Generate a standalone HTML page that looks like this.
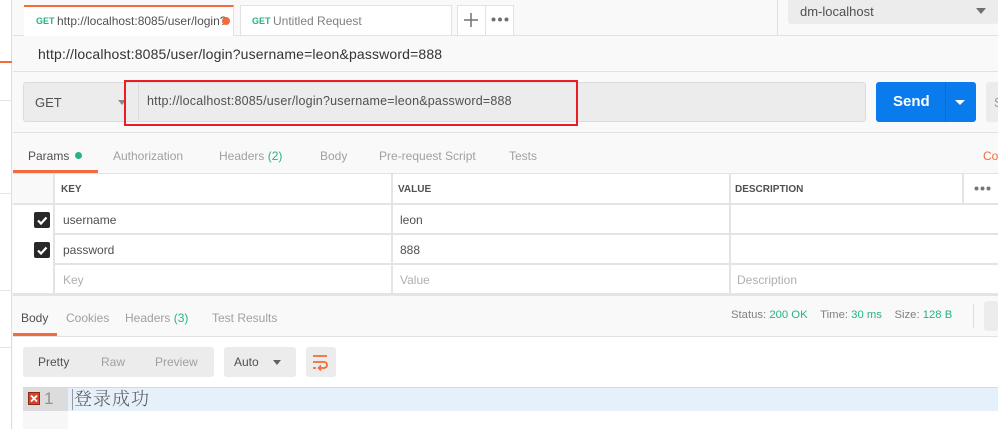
<!DOCTYPE html>
<html><head><meta charset="utf-8"><style>
*{margin:0;padding:0;box-sizing:border-box}
body{width:998px;height:429px;overflow:hidden;background:#f9f9f9;font-family:"Liberation Sans","Noto Sans CJK SC",sans-serif;font-size:12px;color:#505050;position:relative;line-height:1.2}
.a{position:absolute}
.g{color:#26b47f}
</style></head><body>
<div class="a" style="left:0;top:0;width:12px;height:429px;background:#fff;border-right:1px solid #ddd"></div>
<div class="a" style="left:0;top:61px;width:12px;height:2px;background:#f26b3a"></div>
<div class="a" style="left:0;top:100px;width:12px;height:1px;background:#e5e5e5"></div>
<div class="a" style="left:0;top:193px;width:12px;height:1px;background:#e5e5e5"></div>
<div class="a" style="left:0;top:290px;width:12px;height:1px;background:#e5e5e5"></div>
<div class="a" style="left:0;top:347px;width:12px;height:1px;background:#e5e5e5"></div>
<div class="a" style="left:13px;top:35px;width:985px;height:1px;background:#e2e2e2"></div>
<div class="a" style="left:24px;top:5px;width:210px;height:31px;background:#fff;border-top:2px solid #f26b3a;border-right:1px solid #e2e2e2"></div>
<div class="a" style="left:36px;top:16px;font-size:9px;font-weight:bold;color:#26b47f">GET</div>
<div class="a" style="left:57px;top:14px;font-size:12px;color:#505050">http://localhost:8085/user/login?</div>
<div class="a" style="left:222px;top:17px;width:8px;height:8px;border-radius:50%;background:#f26b3a"></div>
<div class="a" style="left:240px;top:5px;width:212px;height:30px;background:#fff;border:1px solid #e2e2e2;border-bottom:none"></div>
<div class="a" style="left:252px;top:16px;font-size:9px;font-weight:bold;color:#26b47f">GET</div>
<div class="a" style="left:273px;top:14px;font-size:12px;color:#808080">Untitled Request</div>
<div class="a" style="left:457px;top:5px;width:57px;height:30px;background:#fff;border:1px solid #e2e2e2;border-bottom:none"></div>
<div class="a" style="left:485px;top:5px;width:1px;height:30px;background:#e2e2e2"></div>
<svg class="a" style="left:464px;top:13px" width="14" height="14"><path d="M7 0v14M0 7h14" stroke="#707070" stroke-width="1.5"/></svg>
<svg class="a" style="left:491px;top:17px" width="18" height="5"><circle cx="2.5" cy="2.5" r="2" fill="#707070"/><circle cx="9" cy="2.5" r="2" fill="#707070"/><circle cx="15.5" cy="2.5" r="2" fill="#707070"/></svg>
<div class="a" style="left:777px;top:0;width:1px;height:35px;background:#e2e2e2"></div>
<div class="a" style="left:788px;top:0;width:210px;height:24px;background:#ececec;border-radius:0 0 3px 3px"></div>
<div class="a" style="left:800px;top:4px;font-size:13px;color:#505050">dm-localhost</div>
<div class="a" style="left:976px;top:8px;border:5px solid transparent;border-top:6px solid #707070"></div>
<div class="a" style="left:38px;top:46px;font-size:14px;color:#333;letter-spacing:0.15px">http://localhost:8085/user/login?username=leon&amp;password=888</div>
<div class="a" style="left:13px;top:71px;width:985px;height:1px;background:#e2e2e2"></div>
<div class="a" style="left:23px;top:82px;width:843px;height:40px;background:#ececec;border:1px solid #dcdcdc;border-radius:3px"></div>
<div class="a" style="left:138px;top:82px;width:1px;height:40px;background:#dcdcdc"></div>
<div class="a" style="left:35px;top:95px;font-size:13px;color:#505050">GET</div>
<div class="a" style="left:118px;top:100px;border:4px solid transparent;border-top:5px solid #888"></div>
<div class="a" style="left:147px;top:94px;font-size:12.5px;color:#505050;letter-spacing:0.2px">http://localhost:8085/user/login?username=leon&amp;password=888</div>
<div class="a" style="left:124px;top:80px;width:454px;height:46px;border:2px solid #ec1c24"></div>
<div class="a" style="left:876px;top:82px;width:100px;height:40px;background:#097bed;border-radius:3px"></div>
<div class="a" style="left:945px;top:82px;width:1px;height:40px;background:#0a6cd0"></div>
<div class="a" style="left:893px;top:93px;font-size:15px;font-weight:bold;color:#fff">Send</div>
<div class="a" style="left:955px;top:100px;border:5px solid transparent;border-top:5px solid #fff"></div>
<div class="a" style="left:986px;top:82px;width:14px;height:40px;background:#ececec;border-radius:3px"></div>
<div class="a" style="left:994px;top:95px;font-size:13px;color:#999">S</div>
<div class="a" style="left:13px;top:132px;width:985px;height:1px;background:#e2e2e2"></div>
<div class="a" style="left:28px;top:149px;font-size:12px;color:#505050">Params</div>
<div class="a" style="left:75px;top:152px;width:7px;height:7px;border-radius:50%;background:#26b47f"></div>
<div class="a" style="left:113px;top:149px;color:#a0a0a0">Authorization</div>
<div class="a" style="left:219px;top:149px;color:#a0a0a0">Headers <span class="g">(2)</span></div>
<div class="a" style="left:320px;top:149px;color:#a0a0a0">Body</div>
<div class="a" style="left:379px;top:149px;color:#a0a0a0">Pre-request Script</div>
<div class="a" style="left:509px;top:149px;color:#a0a0a0">Tests</div>
<div class="a" style="left:983px;top:149px;color:#f26b3a">Co</div>
<div class="a" style="left:13px;top:170px;width:85px;height:3px;background:#f26b3a"></div>
<div class="a" style="left:13px;top:173px;width:985px;height:1px;background:#e2e2e2"></div>
<div class="a" style="left:13px;top:174px;width:985px;height:122px;background:#e4e4e4"></div>
<div class="a" style="left:13px;top:174px;width:40px;height:29px;background:#f9f9f9"></div>
<div class="a" style="left:55px;top:174px;width:336px;height:29px;background:#fff"></div>
<div class="a" style="left:393px;top:174px;width:336px;height:29px;background:#fff"></div>
<div class="a" style="left:731px;top:174px;width:231px;height:29px;background:#fff"></div>
<div class="a" style="left:964px;top:174px;width:34px;height:29px;background:#fff"></div>
<div class="a" style="left:13px;top:205px;width:40px;height:88px;background:#fff"></div>
<div class="a" style="left:55px;top:205px;width:336px;height:28px;background:#fff"></div>
<div class="a" style="left:393px;top:205px;width:336px;height:28px;background:#fff"></div>
<div class="a" style="left:731px;top:205px;width:267px;height:28px;background:#fff"></div>
<div class="a" style="left:55px;top:235px;width:336px;height:28px;background:#fff"></div>
<div class="a" style="left:393px;top:235px;width:336px;height:28px;background:#fff"></div>
<div class="a" style="left:731px;top:235px;width:267px;height:28px;background:#fff"></div>
<div class="a" style="left:55px;top:265px;width:336px;height:28px;background:#fff"></div>
<div class="a" style="left:393px;top:265px;width:336px;height:28px;background:#fff"></div>
<div class="a" style="left:731px;top:265px;width:267px;height:28px;background:#fff"></div>
<div class="a" style="left:61px;top:184px;font-size:10px;font-weight:bold;color:#505050">KEY</div>
<div class="a" style="left:398px;top:184px;font-size:10px;font-weight:bold;color:#505050">VALUE</div>
<div class="a" style="left:735px;top:184px;font-size:10px;font-weight:bold;color:#505050">DESCRIPTION</div>
<svg class="a" style="left:974px;top:186px" width="17" height="5"><circle cx="2.5" cy="2.5" r="2" fill="#777"/><circle cx="8.5" cy="2.5" r="2" fill="#777"/><circle cx="14.5" cy="2.5" r="2" fill="#777"/></svg>
<div class="a" style="left:34px;top:212px;width:16px;height:16px;background:#282828;border-radius:2px"></div>
<div class="a" style="left:34px;top:242px;width:16px;height:16px;background:#282828;border-radius:2px"></div>
<svg class="a" style="left:34px;top:212px" width="16" height="16"><path d="M4 8.5l3 3 5.5-6" stroke="#fff" stroke-width="2.2" fill="none"/></svg>
<svg class="a" style="left:34px;top:242px" width="16" height="16"><path d="M4 8.5l3 3 5.5-6" stroke="#fff" stroke-width="2.2" fill="none"/></svg>
<div class="a" style="left:63px;top:213px;font-size:12px;color:#505050">username</div>
<div class="a" style="left:400px;top:213px;font-size:12px;color:#505050">leon</div>
<div class="a" style="left:63px;top:243px;font-size:12px;color:#505050">password</div>
<div class="a" style="left:400px;top:243px;font-size:12px;color:#505050">888</div>
<div class="a" style="left:63px;top:273px;font-size:12px;color:#b0b0b0">Key</div>
<div class="a" style="left:400px;top:273px;font-size:12px;color:#b0b0b0">Value</div>
<div class="a" style="left:737px;top:273px;font-size:12px;color:#b0b0b0">Description</div>
<div class="a" style="left:21px;top:311px;font-size:12px;color:#505050">Body</div>
<div class="a" style="left:66px;top:311px;color:#a0a0a0">Cookies</div>
<div class="a" style="left:125px;top:311px;color:#a0a0a0">Headers <span class="g">(3)</span></div>
<div class="a" style="left:212px;top:311px;color:#a0a0a0">Test Results</div>
<div class="a" style="left:731px;top:309px;font-size:11.3px;color:#808080">Status: <span class="g">200 OK</span>&nbsp;&nbsp;&nbsp;&nbsp;Time: <span class="g">30 ms</span>&nbsp;&nbsp;&nbsp;&nbsp;Size: <span class="g">128 B</span></div>
<div class="a" style="left:973px;top:304px;width:1px;height:24px;background:#ddd"></div>
<div class="a" style="left:984px;top:301px;width:14px;height:30px;background:#ececec;border-radius:3px"></div>
<div class="a" style="left:13px;top:333px;width:44px;height:3px;background:#f26b3a"></div>
<div class="a" style="left:13px;top:336px;width:985px;height:93px;background:#fff;border-top:1px solid #e2e2e2"></div>
<div class="a" style="left:23px;top:347px;width:191px;height:30px;background:#ececec;border-radius:3px"></div>
<div class="a" style="left:38px;top:355px;color:#505050">Pretty</div>
<div class="a" style="left:101px;top:355px;color:#a0a0a0">Raw</div>
<div class="a" style="left:155px;top:355px;color:#a0a0a0">Preview</div>
<div class="a" style="left:224px;top:347px;width:72px;height:30px;background:#ececec;border-radius:3px"></div>
<div class="a" style="left:234px;top:355px;color:#505050">Auto</div>
<div class="a" style="left:273px;top:360px;border:4px solid transparent;border-top:5px solid #606060"></div>
<div class="a" style="left:306px;top:347px;width:30px;height:30px;background:#ececec;border-radius:3px"></div>
<svg class="a" style="left:312px;top:353px" width="18" height="18"><path d="M1 3h14M1 9h11a3 3 0 0 1 0 6H8M1 15h3" stroke="#f26b3a" stroke-width="1.8" fill="none"/><path d="M9 12.5l-2.5 2.5 2.5 2.5" stroke="#f26b3a" stroke-width="1.6" fill="none"/></svg>
<div class="a" style="left:23px;top:387px;width:975px;height:42px;background:#fff;border-top:1px solid #d8d8d8"></div>
<div class="a" style="left:23px;top:388px;width:45px;height:41px;background:#f7f7f7"></div>
<div class="a" style="left:23px;top:388px;width:45px;height:23px;background:#dcdcdc"></div>
<div class="a" style="left:68px;top:388px;width:930px;height:23px;background:#e6f0fb"></div>
<div class="a" style="left:72px;top:389px;width:1px;height:21px;background:#999"></div>
<div class="a" style="left:28px;top:392px;width:12px;height:13px;background:#d9432b;border:1px solid #8a2a1a"></div>
<svg class="a" style="left:28px;top:392px" width="12" height="13"><path d="M3 3.5l6 6M9 3.5l-6 6" stroke="#fff" stroke-width="1.8"/></svg>
<div class="a" style="left:44px;top:389px;font-size:17px;color:#909090">1</div>
<div class="a" style="left:74px;top:388px;font-size:18px;color:#555;font-family:'Noto Serif CJK SC',serif;letter-spacing:1px;font-weight:300">登录成功</div>
</body></html>
